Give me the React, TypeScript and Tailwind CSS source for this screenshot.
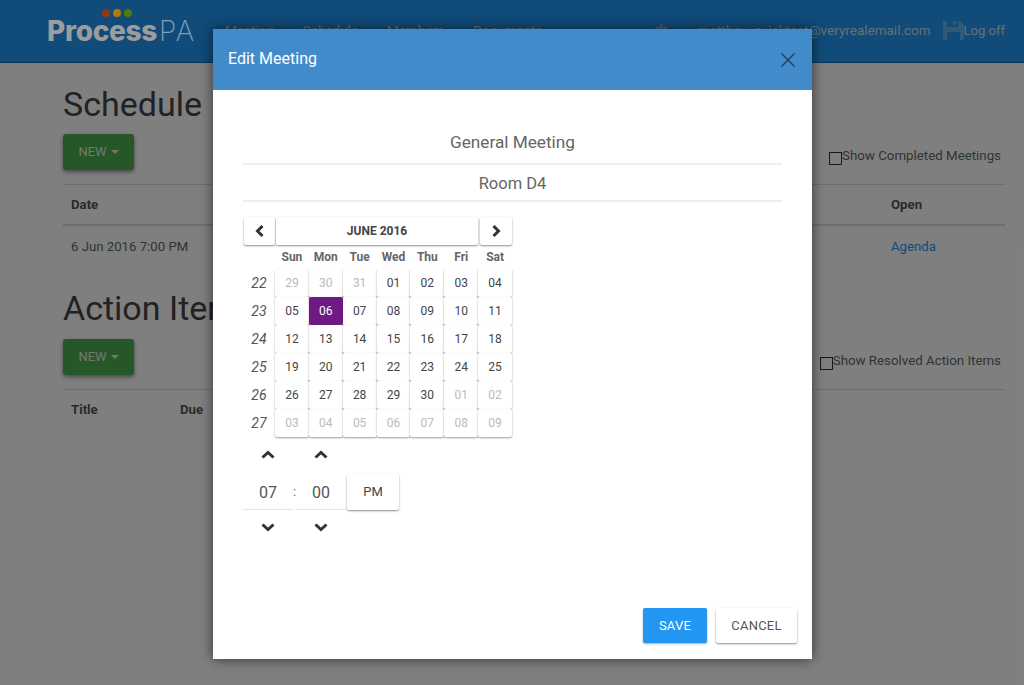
import React from "react";
import { FaCog } from "react-icons/fa";

const ROBOTO = "font-['Roboto',sans-serif]";

function Chev({ d, w, h, color = "#333" }: { d: string; w: number; h: number; color?: string }) {
  return (
    <svg width={w} height={h} viewBox={`0 0 ${w} ${h}`} fill="none" stroke={color} strokeWidth="3">
      <path d={d} />
    </svg>
  );
}
const ChevLeft = () => <Chev w={9} h={12} d="M7.5 1L2.5 6l5 5" />;
const ChevRight = () => <Chev w={9} h={12} d="M1.5 1l5 5-5 5" />;
const ChevUp = () => <Chev w={14} h={9} d="M1.5 7.5L7 2.5l5.5 5" />;
const ChevDown = () => <Chev w={14} h={9} d="M1.5 1.5L7 6.5l5.5-5" />;

function Floppy() {
  return (
    <svg width="21" height="21" viewBox="0 0 21 21" className="shrink-0">
      <path fill="#60b4f0" fillRule="evenodd" d="M0 1h4v6h11V1h2l4 4v15H0V1zM4 12v8h13v-8H4zM10 1h3v4h-3V1z" />
    </svg>
  );
}

function Logo() {
  return (
    <div className="relative z-10 w-[150px] h-[62px] ml-[47px] shrink-0">
      <div className="absolute left-[55px] top-[9px] flex gap-[3px]">
        <span className="w-2 h-2 rounded-full bg-[#96350f]" />
        <span className="w-2 h-2 rounded-full bg-[#b07c08]" />
        <span className="w-2 h-2 rounded-full bg-[#4f7d0a]" />
      </div>
      <div className="absolute left-0 top-[14px] text-[#9c9c9c] text-[28px] leading-[34px] whitespace-nowrap font-['Inter',sans-serif]">
        <span className="font-extrabold tracking-[-0.3px]">Process</span>
        <span className="font-extralight text-[#84a0b8] ml-[2px] tracking-[1.5px]">PA</span>
      </div>
    </div>
  );
}

function NewButton() {
  return (
    <div className="w-[71px] h-9 rounded-[3px] bg-[#4caf50] shadow-[0_2px_4px_rgba(0,0,0,0.45)] flex items-center justify-center gap-1 text-[13px]">
      <span className="text-[#e0f0e0]">NEW</span>
      <span className="w-0 h-0 border-x-[4px] border-x-transparent border-t-[4px] border-t-[#e0f0e0]" />
    </div>
  );
}

function Background() {
  return (
    <div className={`${ROBOTO} w-[1024px] h-[685px] overflow-hidden bg-white text-[#555]`}>
      <nav className="h-[63px] bg-[#2196f3] flex items-center border-b border-[#0f6ab5] text-[13.5px] text-[#d0e0ee]">
        <Logo />
        <div className="flex ml-[28px] gap-[29px] whitespace-nowrap -mt-[1px]">
          <span>Meeting</span>
          <span>Schedule</span>
          <span>Members</span>
          <span>Documents</span>
        </div>
        <div className="ml-auto flex items-center pr-[19px] -mt-[1px] whitespace-nowrap">
          <FaCog className="mr-[30px] text-[#80b8e8] text-[13px]" />
          <span className="mr-[12px]">matthew.quicktest@veryrealemail.com</span>
          <Floppy />
          <span className="text-[13px]">Log off</span>
        </div>
      </nav>
      <div className="pl-[63px] pr-[19px] pt-[20px]">
        <h1 className="text-[34px] leading-[42px] text-[#444]">Schedule</h1>
        <div className="flex items-start justify-between mt-[9px] h-[50px]">
          <NewButton />
          <label className="flex items-start mt-[14px] mr-[4px] text-[13.3px] leading-[16px] text-[#666]">
            <span className="w-[13px] h-[13px] border border-[#333] mt-[4px]" />
            Show Completed Meetings
          </label>
        </div>
        <div className="grid grid-cols-[820px_1fr] text-[13.2px] border-t border-[#ddd]">
          <div className="px-2 h-[41px] flex items-center font-bold text-[#555] border-b-2 border-[#ddd]">Date</div>
          <div className="px-2 h-[41px] flex items-center font-bold text-[#555] border-b-2 border-[#ddd]">Open</div>
          <div className="px-2 h-[41px] flex items-center text-[#666]">6 Jun 2016 7:00 PM</div>
          <div className="px-2 h-[41px] flex items-center text-[#2196f3]">Agenda</div>
        </div>
        <h1 className="text-[34px] leading-[42px] text-[#444] mt-[20px]">Action Items</h1>
        <div className="flex items-start justify-between mt-[10px] h-[50px]">
          <NewButton />
          <label className="flex items-start mt-[14px] mr-[4px] text-[13.3px] leading-[16px] text-[#666]">
            <span className="w-[13px] h-[13px] border border-[#333] mt-[4px]" />
            Show Resolved Action Items
          </label>
        </div>
        <div className="grid grid-cols-[109px_1fr] text-[13.2px] border-t border-[#ddd]">
          <div className="px-2 h-[39px] flex items-center font-bold text-[#555]">Title</div>
          <div className="px-2 h-[39px] flex items-center font-bold text-[#555]">Due</div>
        </div>
      </div>
    </div>
  );
}

const weeks: { n: number; days: [string, boolean][] }[] = [
  { n: 22, days: [["29", true], ["30", true], ["31", true], ["01", false], ["02", false], ["03", false], ["04", false]] },
  { n: 23, days: [["05", false], ["06", false], ["07", false], ["08", false], ["09", false], ["10", false], ["11", false]] },
  { n: 24, days: [["12", false], ["13", false], ["14", false], ["15", false], ["16", false], ["17", false], ["18", false]] },
  { n: 25, days: [["19", false], ["20", false], ["21", false], ["22", false], ["23", false], ["24", false], ["25", false]] },
  { n: 26, days: [["26", false], ["27", false], ["28", false], ["29", false], ["30", false], ["01", true], ["02", true]] },
  { n: 27, days: [["03", true], ["04", true], ["05", true], ["06", true], ["07", true], ["08", true], ["09", true]] },
];

const btn = "rounded-[2px] bg-white shadow-[0_1px_2px_rgba(0,0,0,0.45)] flex items-center justify-center";

function Calendar() {
  return (
    <div className="w-[269px]">
      <div className="grid grid-cols-[31px_1fr_32px] gap-[1px] h-[28px] pl-[1px]">
        <div className={btn}><ChevLeft /></div>
        <div className={`${btn} font-bold text-[12px] text-[#444] mr-[1px]`}>JUNE 2016</div>
        <div className={btn}><ChevRight /></div>
      </div>
      <div className="grid grid-cols-[32px_repeat(7,1fr)] h-[24px] items-center text-[12px] font-bold text-[#666] text-center">
        <span />
        {["Sun", "Mon", "Tue", "Wed", "Thu", "Fri", "Sat"].map((d) => (
          <span key={d}>{d}</span>
        ))}
      </div>
      <div className="grid grid-cols-[32px_repeat(7,1fr)] auto-rows-[28px] text-[12px]">
        {weeks.map((w) => (
          <React.Fragment key={w.n}>
            <span className="flex items-center justify-center italic text-[14px] text-[#555]">{w.n}</span>
            {w.days.map(([d, muted], i) => {
              const active = w.n === 23 && d === "06";
              return (
                <div
                  key={i}
                  className={`flex items-center justify-center rounded-[2px] shadow-[0_1px_2px_rgba(0,0,0,0.4)] ${
                    active ? "bg-[#6f1a84] text-white" : muted ? "bg-white text-[#bbb]" : "bg-white text-[#444]"
                  }`}
                >
                  {d}
                </div>
              );
            })}
          </React.Fragment>
        ))}
      </div>
    </div>
  );
}

function TimePicker() {
  return (
    <div className="mt-[6px] w-[160px] text-[#444]">
      <div className="flex h-[22px] items-center">
        <span className="w-[50px] flex justify-center"><ChevUp /></span>
        <span className="w-[3px]" />
        <span className="w-[50px] flex justify-center"><ChevUp /></span>
      </div>
      <div className="flex items-stretch h-[36px] mt-[9px]">
        <span className="w-[50px] pt-[2px] flex items-center justify-center text-[16px] text-[#555] border-b border-[#e5e5e5]">07</span>
        <span className="w-[3px] flex items-center justify-center text-[13px] text-[#666]">:</span>
        <span className="w-[50px] pt-[2px] flex items-center justify-center text-[16px] text-[#555] border-b border-[#e5e5e5]">00</span>
        <span className={`${btn} w-[52px] ml-[1px] text-[13px] text-[#444]`}>PM</span>
      </div>
      <div className="flex h-[22px] items-center mt-[6px]">
        <span className="w-[50px] flex justify-center"><ChevDown /></span>
        <span className="w-[3px]" />
        <span className="w-[50px] flex justify-center"><ChevDown /></span>
      </div>
    </div>
  );
}

function Modal() {
  return (
    <div className={`${ROBOTO} absolute left-[213px] top-[29px] w-[599px] h-[630px] bg-white shadow-[0_0_12px_rgba(0,0,0,0.6)] flex flex-col`}>
      <header className="h-[61px] shrink-0 bg-[#428bca] flex items-center justify-between pl-[15px] pr-[15px] text-white">
        <span className="text-[16px] pb-[2px]">Edit Meeting</span>
        <svg width="18" height="18" viewBox="0 0 18 18" fill="none" stroke="#1f3f5f" strokeWidth="1.4">
          <path d="M2.5 2.5l13 13M15.5 2.5l-13 13" />
        </svg>
      </header>
      <div className="flex-1 px-[30px] pt-[36px] flex flex-col">
        <div className="h-[39px] pb-[4px] flex items-center justify-center text-[17.2px] text-[#666] border-b-2 border-[#eee]">General Meeting</div>
        <div className="h-[37px] pt-[4px] flex items-center justify-center text-[16.5px] text-[#666] border-b-2 border-[#eee]">Room D4</div>
        <div className="mt-[15px]">
          <Calendar />
          <TimePicker />
        </div>
      </div>
      <footer className="flex justify-end gap-[9px] pr-[15px] pb-[16px]">
        <div className="w-[64px] h-[35px] rounded-[2px] bg-[#2196f3] text-white text-[13px] tracking-[0.2px] flex items-center justify-center shadow-[0_1px_2px_rgba(0,0,0,0.35)]">SAVE</div>
        <div className={`${btn} w-[81px] h-[35px] text-[13px] tracking-[0.2px] text-[#555]`}>CANCEL</div>
      </footer>
    </div>
  );
}

export default function App() {
  return (
    <div className="relative w-[1024px] h-[685px] overflow-hidden">
      <Background />
      <div className="absolute inset-0 bg-black/50" />
      <Modal />
    </div>
  );
}
